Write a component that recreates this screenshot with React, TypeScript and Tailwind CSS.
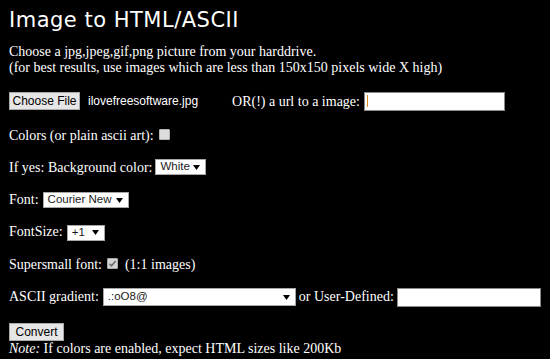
import React from "react";

const serif = "font-['Liberation_Serif','Times_New_Roman',serif]";
const sans = "font-['Liberation_Sans',Arial,sans-serif]";

function Caret() {
  return (
    <svg width="7" height="5" viewBox="0 0 7 5" className="shrink-0">
      <path d="M0 0 H7 L3.5 5 Z" fill="#000" />
    </svg>
  );
}

function FakeSelect({ value, width, height = 16 }: { value: string; width: number; height?: number }) {
  return (
    <div
      className={`shrink-0 flex items-center justify-between whitespace-nowrap bg-white border border-[#a6a6a6] pl-[4px] pr-[5px] text-[#1a1a1a] text-[11.5px] leading-none ${sans}`}
      style={{ width, height }}
    >
      <span>{value}</span>
      <Caret />
    </div>
  );
}

function GrayButton({ label, width }: { label: string; width: number }) {
  return (
    <div
      className={`shrink-0 flex items-center justify-center whitespace-nowrap h-[18px] bg-[#e6e6e6] border border-[#a9a9a9] text-black text-[12px] leading-none ${sans}`}
      style={{ width }}
    >
      {label}
    </div>
  );
}

export default function App() {
  return (
    <div className={`w-[550px] h-[359px] overflow-hidden bg-black text-white px-[9px] whitespace-nowrap ${serif}`}>
      <h1 className="mt-[8px] text-[21px] leading-[24px] font-['DejaVu_Sans',Verdana,sans-serif] tracking-[0.5px]">
        Image to HTML/ASCII
      </h1>

      <p className="mt-[12px] text-[14px] leading-[16px]">
        Choose a jpg,jpeg,gif,png picture from your harddrive.
        <br />
        (for best results, use images which are less than 150x150 pixels wide X high)
      </p>

      <div className="mt-[15px] h-[20px] flex items-center text-[14px]">
        <GrayButton label="Choose File" width={71} />
        <span className={`ml-[8px] text-[12px] ${sans}`}>ilovefreesoftware.jpg</span>
        <span className="ml-[34px]">OR(!) a url to a image:</span>
        <div className="ml-[4px] w-[141px] h-[19px] bg-white border border-[#8a8a8a] flex items-center pl-[2px]">
          <div className="w-[1px] h-[12px] bg-[#d98c1f]" />
        </div>
      </div>

      <div className="mt-[14px] h-[20px] flex items-center text-[14px]">
        <span>Colors (or plain ascii art):</span>
        <div className="ml-[5px] w-[11px] h-[11px] bg-[#dcdcdc] border border-[#b5b5b5] rounded-[1px] -mt-[1px]" />
      </div>

      <div className="mt-[12px] h-[20px] flex items-center text-[14px]">
        <span>If yes: Background color:</span>
        <div className="ml-[3px]">
          <FakeSelect value="White" width={51} />
        </div>
      </div>

      <div className="mt-[12px] h-[20px] flex items-center text-[14px]">
        <span>Font:</span>
        <div className="ml-[4px] mt-[2px]">
          <FakeSelect value="Courier New" width={86} />
        </div>
      </div>

      <div className="mt-[12px] h-[20px] flex items-center text-[14px]">
        <span>FontSize:</span>
        <div className="ml-[4px] mt-[3px]">
          <FakeSelect value="+1" width={38} />
        </div>
      </div>

      <div className="mt-[13px] h-[20px] flex items-center text-[14px]">
        <span>Supersmall font:</span>
        <div className="ml-[5px] -mt-[1px] w-[11px] h-[11px] bg-[#d4d4d4] border border-[#a8a8a8] rounded-[1px] flex items-center justify-center">
          <svg width="9" height="9" viewBox="0 0 9 9">
            <path d="M1.5 4.8 L3.6 6.8 L7.6 2" stroke="#6b6b6b" strokeWidth="1.6" fill="none" />
          </svg>
        </div>
        <span className="ml-[7px]">(1:1 images)</span>
      </div>

      <div className="mt-[12px] h-[20px] flex items-center text-[14px]">
        <span>ASCII gradient:</span>
        <div className="ml-[4px] mt-[2px]">
          <FakeSelect value=".:oO8@" width={193} height={18} />
        </div>
        <span className="ml-[3px]">or User-Defined:</span>
        <div className="ml-[3px] mt-[2px] w-[150px] h-[19px] bg-white border border-[#8a8a8a]" />
      </div>

      <div className="mt-[17px]">
        <GrayButton label="Convert" width={55} />
      </div>

      <p className="text-[14px] leading-[15px]">
        <i>Note:</i> If colors are enabled, expect HTML sizes like 200Kb
      </p>
    </div>
  );
}
